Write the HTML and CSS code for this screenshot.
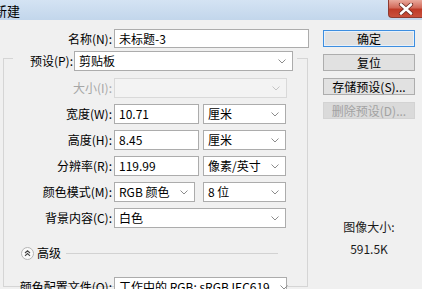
FILE: index.html
```html
<!DOCTYPE html>
<html lang="zh">
<head>
<meta charset="utf-8">
<title>新建</title>
<link rel="stylesheet" href="styles.css">
</head>
<body>
<div class="window">
  <div class="titlebar">
    <span class="title">新建</span>
    <div class="close">
      <svg width="16" height="12" viewBox="0 0 16 12"><path d="M3 1.5 L13 10.5 M13 1.5 L3 10.5" stroke="#6b2a22" stroke-width="4.2" stroke-linecap="round"/><path d="M3 1.5 L13 10.5 M13 1.5 L3 10.5" stroke="#fff" stroke-width="2.6" stroke-linecap="round"/></svg>
    </div>
  </div>
  <div class="content">
    <div class="left">
      <div class="name-row">
        <span class="lbl lbl-name">名称(N):</span>
        <div class="field w-name">未标题-3</div>
      </div>
      <fieldset class="group">
        <legend class="preset">
          <span class="lbl lbl-preset">预设(P):</span>
          <div class="field select w-preset">剪贴板<svg class="chev" width="8" height="5" viewBox="0 0 8 5"><polyline points="0.5,0.5 4,4 7.5,0.5" fill="none" stroke="#8c8c8c"/></svg></div>
        </legend>
        <div class="row first">
          <span class="lbl disabled">大小(I):</span>
          <div class="field select off w-full"><svg class="chev" width="8" height="5" viewBox="0 0 8 5"><polyline points="0.5,0.5 4,4 7.5,0.5" fill="none" stroke="#c4c4c4"/></svg></div>
        </div>
        <div class="row">
          <span class="lbl">宽度(W):</span>
          <div class="field w-num">10.71</div>
          <div class="field select w-unit">厘米<svg class="chev" width="8" height="5" viewBox="0 0 8 5"><polyline points="0.5,0.5 4,4 7.5,0.5" fill="none" stroke="#8c8c8c"/></svg></div>
        </div>
        <div class="row">
          <span class="lbl">高度(H):</span>
          <div class="field w-num">8.45</div>
          <div class="field select w-unit">厘米<svg class="chev" width="8" height="5" viewBox="0 0 8 5"><polyline points="0.5,0.5 4,4 7.5,0.5" fill="none" stroke="#8c8c8c"/></svg></div>
        </div>
        <div class="row">
          <span class="lbl">分辨率(R):</span>
          <div class="field w-num">119.99</div>
          <div class="field select w-unit">像素/英寸<svg class="chev" width="8" height="5" viewBox="0 0 8 5"><polyline points="0.5,0.5 4,4 7.5,0.5" fill="none" stroke="#8c8c8c"/></svg></div>
        </div>
        <div class="row">
          <span class="lbl">颜色模式(M):</span>
          <div class="field select w-mode">RGB 颜色<svg class="chev" width="8" height="5" viewBox="0 0 8 5"><polyline points="0.5,0.5 4,4 7.5,0.5" fill="none" stroke="#8c8c8c"/></svg></div>
          <div class="field select w-bit">8 位<svg class="chev" width="8" height="5" viewBox="0 0 8 5"><polyline points="0.5,0.5 4,4 7.5,0.5" fill="none" stroke="#8c8c8c"/></svg></div>
        </div>
        <div class="row">
          <span class="lbl">背景内容(C):</span>
          <div class="field select w-bg">白色<svg class="chev" width="8" height="5" viewBox="0 0 8 5"><polyline points="0.5,0.5 4,4 7.5,0.5" fill="none" stroke="#8c8c8c"/></svg></div>
        </div>
        <div class="adv">
          <span class="adv-icon"><svg width="13" height="13" viewBox="0 0 13 13"><circle cx="6.5" cy="6.5" r="6" fill="#fafafa" stroke="#b4b4b4"/><polyline points="4,6 6.5,3.8 9,6" fill="none" stroke="#444" stroke-width="1.1"/><polyline points="4,8.8 6.5,6.6 9,8.8" fill="none" stroke="#444" stroke-width="1.1"/></svg></span>
          <span class="adv-text">高级</span>
          <span class="adv-line"></span>
        </div>
        <div class="row profile">
          <span class="lbl">颜色配置文件(O):</span>
          <div class="field select w-full">工作中的 RGB: sRGB IEC619...<svg class="chev" width="8" height="5" viewBox="0 0 8 5"><polyline points="0.5,0.5 4,4 7.5,0.5" fill="none" stroke="#8c8c8c"/></svg></div>
        </div>
      </fieldset>
    </div>
    <div class="right">
      <div class="btn default">确定</div>
      <div class="btn">复位</div>
      <div class="btn">存储预设(S)...</div>
      <div class="btn disabled-btn">删除预设(D)...</div>
      <div class="imgsize">
        <div>图像大小:</div>
        <div>591.5K</div>
      </div>
    </div>
  </div>
</div>
</body>
</html>
```

FILE: styles.css
```css
html, body {
  margin: 0;
  padding: 0;
}
body {
  width: 422px;
  height: 289px;
  overflow: hidden;
  background: #f0f0f0;
  font-family: "Noto Sans CJK SC", "Microsoft YaHei", sans-serif;
  font-size: 12px;
  color: #000;
}
.window {
  width: 422px;
}
.titlebar {
  height: 20px;
  display: flex;
  align-items: flex-start;
  background: linear-gradient(#d4e3f3, #c2d6eb);
  overflow: hidden;
}
.title {
  font-size: 13px;
  line-height: 21px;
  margin-left: -6px;
}
.close {
  margin-left: auto;
  width: 34px;
  height: 18px;
  box-sizing: border-box;
  border: 1px solid #8e3b30;
  border-top: 0;
  border-right: 0;
  border-radius: 0 0 0 4px;
  background: linear-gradient(#e9a99c, #d26a5a 45%, #bf3b28 55%, #c9503c);
  display: flex;
  align-items: center;
  justify-content: center;
}
.content {
  display: flex;
  align-items: flex-start;
}
.left {
  width: 310px;
  flex: none;
}
.name-row {
  margin-top: 9px;
  display: flex;
  align-items: center;
  height: 19px;
}
.lbl {
  width: 108px;
  flex: none;
  text-align: right;
  line-height: 16px;
  white-space: nowrap;
}
.lbl-name {
  width: 112px;
}
.lbl.disabled {
  color: #a6a6a6;
}
.field {
  box-sizing: border-box;
  height: 20px;
  border: 1px solid #acacac;
  background: #fff;
  display: flex;
  align-items: center;
  padding: 0 6px 0 4px;
  margin-left: 2px;
  line-height: 16px;
  white-space: nowrap;
  flex: none;
}
.w-name {
  width: 195px;
  height: 19px;
}
.select .chev {
  margin-left: auto;
  flex: none;
}
.field.off {
  background: #f3f3f3;
  border-color: #d9d9d9;
}
.group {
  margin: -3px 0 0 3px;
  padding: 0;
  width: 303px;
  min-width: 0;
  border: 1px solid #d5d5d5;
  height: 240px;
}
.preset {
  margin-left: 9px;
  padding: 6px 4px 0 0;
  width: 284px;
  box-sizing: border-box;
  display: flex;
  align-items: center;
}
.lbl-preset {
  width: 60px;
}
.preset .field {
  margin-left: 1px;
}
.w-preset {
  width: 219px;
}
.row {
  display: flex;
  align-items: center;
  height: 20px;
  margin-top: 6px;
}
.row.first {
  margin-top: 7px;
}
.w-full {
  width: 173px;
}
.w-num {
  width: 85px;
}
.w-unit {
  width: 83px;
  margin-left: 4px;
}
.w-mode {
  width: 81px;
}
.w-bit {
  width: 83px;
  margin-left: 8px;
}
.w-bg {
  width: 172px;
}
.adv {
  display: flex;
  align-items: center;
  height: 14px;
  margin-top: 18px;
  padding-left: 17px;
}
.adv-icon {
  width: 13px;
  height: 13px;
  display: flex;
}
.adv-text {
  margin-left: 3px;
  line-height: 14px;
}
.adv-line {
  flex: 1;
  height: 1px;
  background: #d2d2d2;
  margin: 0 29px 0 5px;
}
.row.profile {
  margin-top: 17px;
}
.right {
  width: 92px;
  margin-left: 13px;
  padding-top: 10px;
  display: flex;
  flex-direction: column;
  gap: 7px;
}
.btn {
  height: 17px;
  box-sizing: border-box;
  border: 1px solid #adadad;
  background: #e1e1e1;
  display: flex;
  align-items: center;
  justify-content: center;
  line-height: 15px;
  white-space: nowrap;
}
.btn.default {
  border-color: #3d8ee0;
  box-shadow: inset 0 0 0 1px #e8f1fa;
}
.btn.disabled-btn {
  background: #dadada;
  border-color: #d3d3d3;
  color: #a2a2a2;
}
.imgsize {
  margin-top: 90px;
  text-align: center;
  line-height: 22px;
  color: #1a1a1a;
}
```
